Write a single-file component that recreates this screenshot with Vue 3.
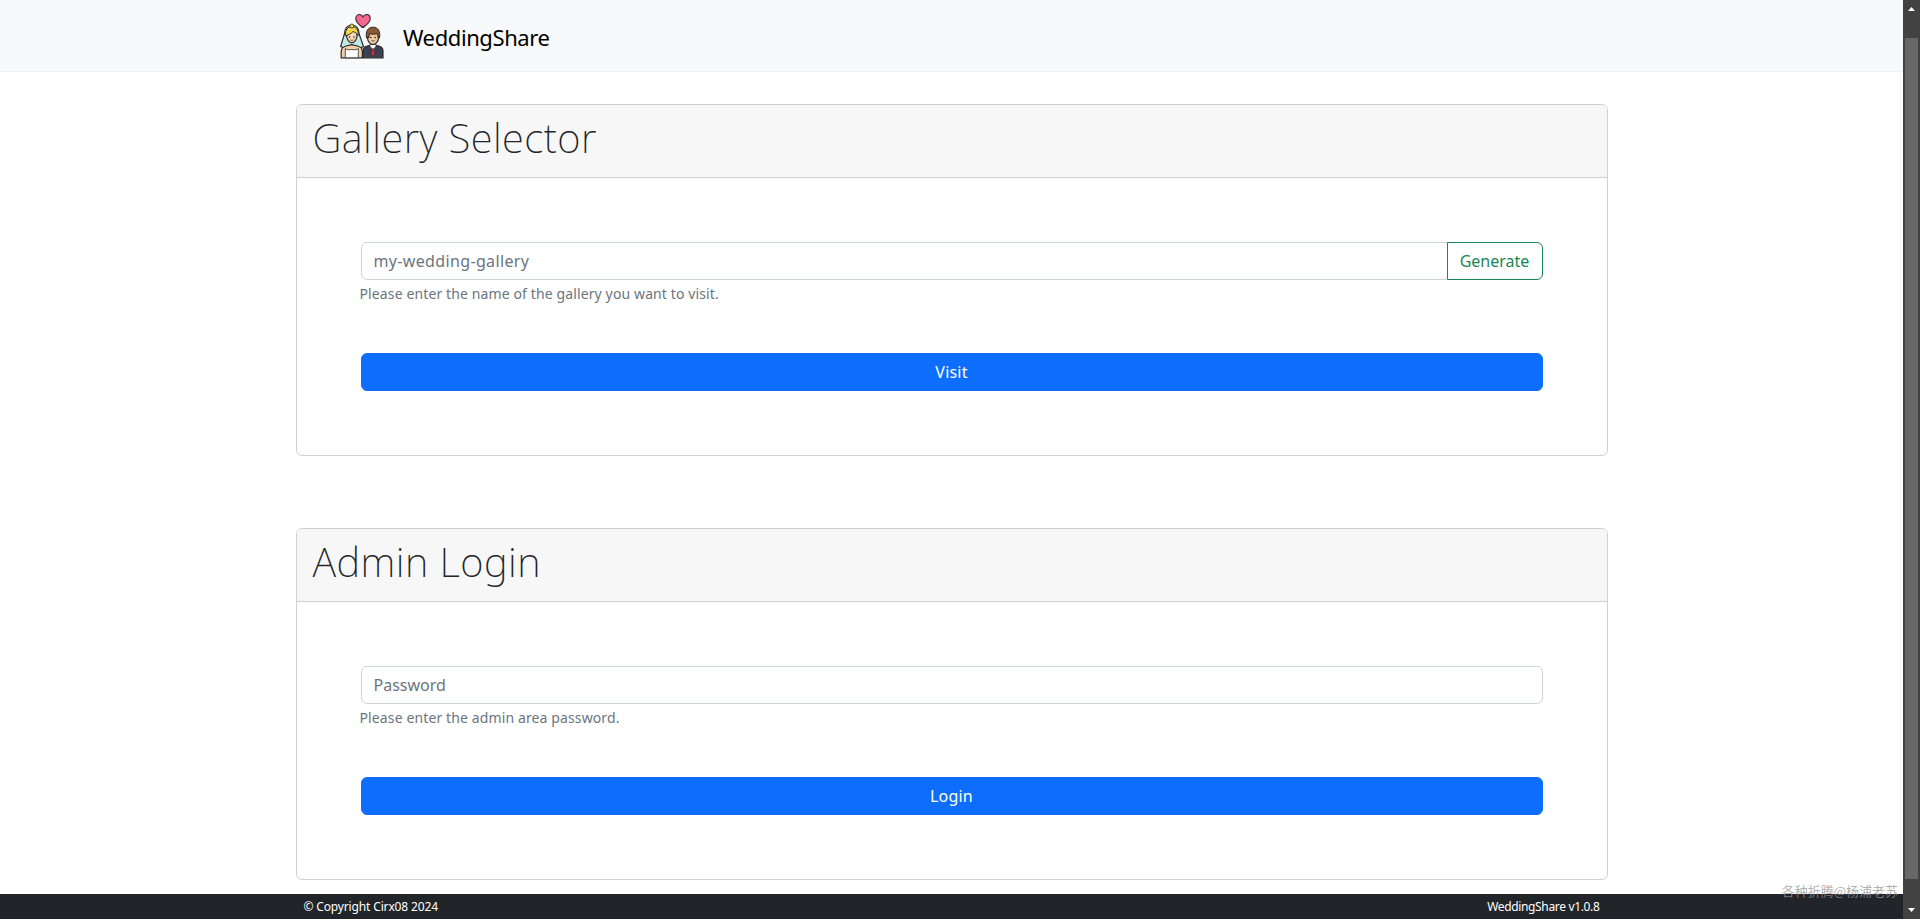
<script setup>
const cards = [
  { title: 'Gallery Selector', placeholder: 'my-wedding-gallery', help: 'Please enter the name of the gallery you want to visit.', action: 'Visit', extra: 'Generate' },
  { title: 'Admin Login', placeholder: 'Password', help: 'Please enter the admin area password.', action: 'Login', extra: '' }
]
</script>

<template>
  <div class="shell">
    <div class="page">
      <nav class="navbar">
        <a class="brand">
          <svg class="logo" viewBox="0 0 46 46" width="46" height="46" aria-hidden="true">
            <path d="M23 14.500C18.500 11.500 15.800 8.800 15.800 5.400 15.800 3 17.600 1.500 19.500 1.500c1.500 0 2.800.8 3.500 2.200.7-1.400 2-2.200 3.500-2.200 1.900 0 3.700 1.500 3.700 3.900 0 3.400-2.700 6.100-7.500 9.100z" fill="#f4668f" stroke="#2a2a2a" stroke-width="1.100"/>
            <path d="M11.800 12C6 12 4.600 17 4.300 21.500L.6 33.500c2.500 1.600 5 2.200 7.400 2.200h8c2.500 0 5-.8 7.500-2.200L19.300 21.500C19 16.500 17.500 12 11.800 12z" fill="#bfe9e4" stroke="#2a2a2a" stroke-width="1.200"/>
            <path d="M1.200 44.800V38.500c0-3.200 2-4.700 4.900-5.500l5.700-1.400 5.700 1.400c2.900.8 4.900 2.300 4.900 5.500v6.300z" fill="#f3cfa8" stroke="#2a2a2a" stroke-width="1.200"/>
            <path d="M5.300 44.800V35.700l3.200 1.200 3.300-.4 3.300.4 3.200-1.200v9.100z" fill="#fff" stroke="#2a2a2a" stroke-width=".8"/>
            <path d="M6.500 22c0-5 2.400-6.500 5.300-6.500s5.300 1.500 5.300 6.500c0 4.700-2.800 7.800-5.300 7.800S6.500 26.700 6.500 22z" fill="#f6d8b4" stroke="#2a2a2a" stroke-width="1.200"/>
            <path d="M5.700 22.800C4.800 16 8 13.800 11.800 13.800s7 2.200 6.300 9c-1-2.500-3.200-3.800-5.300-4.100-1.500 1.800-4.300 3.200-7.100 4.100z" fill="#f7d548" stroke="#2a2a2a" stroke-width="1"/>
            <circle cx="11.800" cy="13" r="2" fill="#f7d548" stroke="#2a2a2a" stroke-width=".8"/>
            <circle cx="9.500" cy="24" r=".8" fill="#2a2a2a"/>
            <circle cx="14" cy="24" r=".8" fill="#2a2a2a"/>
            <path d="M10.300 26.800c1 .8 2 .8 3 0" fill="none" stroke="#2a2a2a" stroke-width=".8"/>
            <path d="M23 44.800V38c0-3 1.700-4.300 4.200-5l5.800-1.700 5.800 1.700c2.500.7 4.200 2 4.200 5v6.800z" fill="#3d4054" stroke="#2a2a2a" stroke-width="1.200"/>
            <path d="M29.300 32.200l3.700 5.300 3.700-5.300-3.700-1.100z" fill="#fff" stroke="#2a2a2a" stroke-width=".7"/>
            <path d="M32 35.800h2l.7 5.200-1.700 2.800-1.700-2.800z" fill="#d92b3a" stroke="#2a2a2a" stroke-width=".5"/>
            <path d="M27.600 20.500h10.800v4.500c0 3.700-2.600 6.300-5.400 6.300s-5.400-2.600-5.400-6.300z" fill="#f3c8a0" stroke="#2a2a2a" stroke-width="1.200"/>
            <path d="M26.500 25c-1.200-7 1.600-10.800 6.500-10.800s7.700 3.800 6.500 10.800l-1.500-.6c0-2.200-.5-3.200-1-3.800-2 .9-5.100.9-7.100 0-.5.600-.9 1.600-.9 3.800z" fill="#8b5a32" stroke="#2a2a2a" stroke-width="1"/>
            <circle cx="30.800" cy="24.500" r=".8" fill="#2a2a2a"/>
            <circle cx="35.200" cy="24.500" r=".8" fill="#2a2a2a"/>
            <path d="M31.500 27.500c1 .7 2 .7 3 0" fill="none" stroke="#2a2a2a" stroke-width=".8"/>
          </svg>
          <span class="brand-name">WeddingShare</span>
        </a>
      </nav>

      <main class="content">
        <section v-for="card in cards" :key="card.title" class="card">
          <header class="card-header">
            <h1 class="card-title">{{ card.title }}</h1>
          </header>
          <div class="card-body">
            <div class="input-row">
              <input class="field" :class="{ joined: card.extra }" type="text" :placeholder="card.placeholder" />
              <button v-if="card.extra" class="btn-generate" type="button">{{ card.extra }}</button>
            </div>
            <div class="help">{{ card.help }}</div>
            <button class="btn-primary" type="button">{{ card.action }}</button>
          </div>
        </section>
      </main>

      <footer class="footer">
        <div class="footer-inner">
          <span class="copyright">© Copyright Cirx08 2024</span>
          <span class="version">WeddingShare v1.0.8</span>
        </div>
      </footer>
    </div>

    <aside class="scrollbar" aria-hidden="true">
      <svg class="arrow" viewBox="0 0 7 4" width="7" height="4"><path d="M3.500 0L7 4H0z" fill="#fff"/></svg>
      <div class="thumb-wrap"><div class="thumb"></div></div>
      <svg class="arrow" viewBox="0 0 7 4" width="7" height="4"><path d="M0 0h7L3.500 4z" fill="#fff"/></svg>
    </aside>

    <div class="watermark">各种折腾@杨浦老苏</div>
  </div>
</template>

<style>
html, body { margin: 0; height: 100%; overflow: hidden; background: #fff; }
</style>

<style scoped>
.shell {
  display: flex;
  height: 919px;
  position: relative;
  overflow: hidden;
  font-family: "Noto Sans", "Open Sans", "Liberation Sans", "Noto Sans CJK SC", sans-serif;
  color: #212529;
}
.page {
  flex: 1;
  min-width: 0;
  display: flex;
  flex-direction: column;
}
.navbar {
  height: 71px;
  flex: none;
  background: #f8f9fa;
  border-bottom: 1px solid #eeeff0;
  display: flex;
  align-items: center;
  padding-left: 340px;
}
.brand { display: flex; align-items: center; gap: 17px; }
.logo { display: block; }
.brand-name { font-size: 22px; line-height: 30px; padding-top: 2px; color: #000; letter-spacing: -0.4px; }
.content {
  flex: 1;
  min-height: 0;
  padding-top: 32px;
  width: 1312px;
  margin: 0 auto;
  box-sizing: border-box;
}
.card {
  border: 1px solid #d0d0d0;
  border-radius: 6px;
  margin-bottom: 72px;
  overflow: hidden;
}
.card-header {
  background: #f7f7f7;
  border-bottom: 1px solid #d0d0d0;
  height: 73px;
  box-sizing: border-box;
  padding: 9px 16px 7px;
}
.card-title {
  margin: 0;
  font-size: 40px;
  line-height: 48px;
  font-weight: 200;
  letter-spacing: 0.45px;
}
.card-body { padding: 64px; }
.input-row { display: flex; }
.field {
  flex: 1;
  min-width: 0;
  height: 38px;
  box-sizing: border-box;
  border: 1px solid #ced4da;
  border-radius: 6px;
  padding: 6px 12px;
  font: inherit;
  font-size: 16px;
  color: #212529;
  outline: none;
}
.field::placeholder { color: #6c757d; opacity: 1; }
.field.joined { border-radius: 6px 0 0 6px; letter-spacing: 0.35px; }
.btn-generate {
  flex: none;
  width: 96px;
  height: 38px;
  margin-left: -1px;
  box-sizing: border-box;
  background: #fff;
  border: 1px solid #198754;
  border-radius: 0 6px 6px 0;
  color: #198754;
  font: inherit;
  font-size: 16px;
  padding: 0;
}
.help {
  margin-top: 3px;
  padding-bottom: 1px;
  font-size: 14px;
  line-height: 21px;
  color: #6c757d;
  letter-spacing: 0.12px;
  margin-left: -1px;
}
.btn-primary {
  display: block;
  width: 100%;
  height: 38px;
  margin-top: 48px;
  background: #0d6efd;
  border: 1px solid #0d6efd;
  border-radius: 6px;
  color: #fff;
  font: inherit;
  font-size: 16px;
  letter-spacing: 0.2px;
  padding: 0;
}
.footer {
  flex: none;
  height: 25px;
  background: #212529;
  color: #fff;
  font-size: 12px;
}
.footer-inner {
  width: 1296px;
  margin: 0 auto;
  height: 25px;
  display: flex;
  align-items: center;
  justify-content: space-between;
}
.copyright { letter-spacing: -0.15px; }
.version { letter-spacing: -0.34px; }
.scrollbar {
  flex: none;
  width: 17px;
  background: #424242;
  display: flex;
  flex-direction: column;
  align-items: center;
  justify-content: space-between;
  padding: 7px 0;
  box-sizing: border-box;
}
.arrow { display: block; flex: none; }
.thumb-wrap { flex: 1; width: 100%; padding: 27px 0 29px; box-sizing: border-box; display: flex; justify-content: center; }
.thumb { width: 13px; height: 100%; background: #686868; }
.watermark {
  position: absolute;
  right: 22px;
  bottom: 19px;
  font-size: 13px;
  line-height: 18px;
  color: rgba(150, 150, 150, 0.75);
  font-family: "Noto Sans CJK SC", sans-serif;
}
</style>
